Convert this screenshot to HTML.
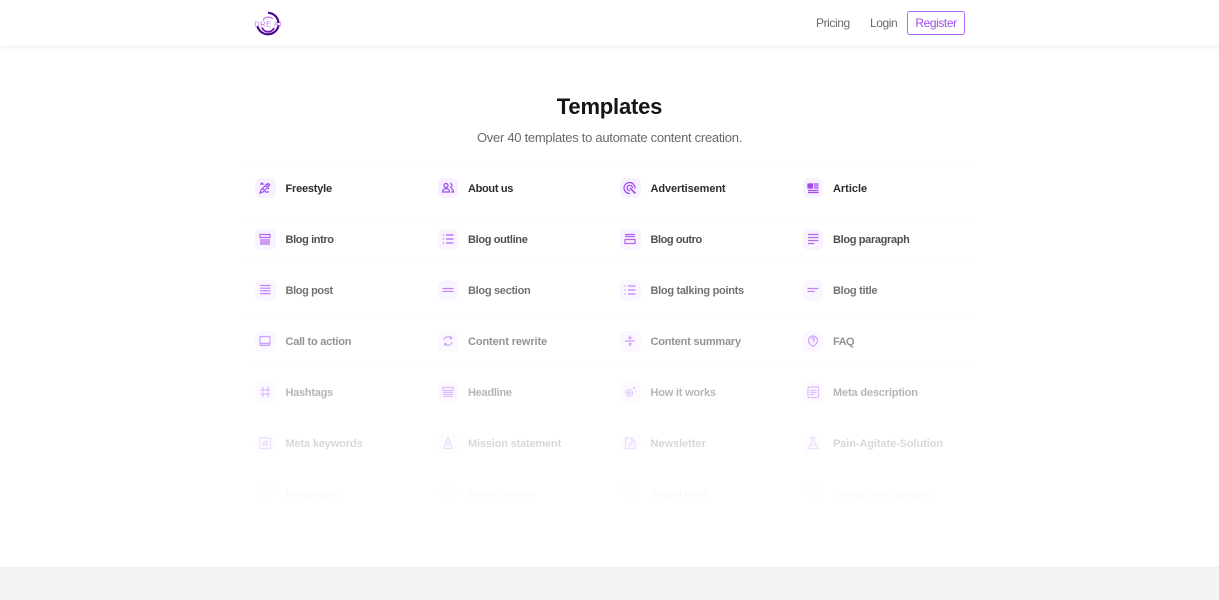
<!DOCTYPE html>
<html><head><meta charset="utf-8"><title>Templates</title>
<style>
html,body{margin:0;padding:0;background:#fff}
body{width:1219px;height:600px;position:relative;overflow:hidden;font-family:"Liberation Sans",sans-serif}
.hd{position:absolute;left:0;top:0;width:1219px;height:46px;background:#fff;box-shadow:0 1px 6px rgba(0,0,0,.09);z-index:5}
.nav{position:absolute;font-size:12px;line-height:16px;color:#6b6b6b;top:15px;letter-spacing:-.42px}
.reg{position:absolute;left:907px;top:11px;width:56px;height:22px;border:1px solid #b26cf5;border-radius:3px;color:#a24bf2;font-size:12px;line-height:22px;text-align:center;letter-spacing:-.42px}
h1{position:absolute;left:0;width:1219px;top:93px;margin:0;text-align:center;font-size:22px;line-height:28px;font-weight:700;color:#151515;letter-spacing:-.2px}
.sub{position:absolute;left:0;width:1219px;top:130px;text-align:center;font-size:13px;line-height:16px;color:#6a6a6a;letter-spacing:-.28px}
.ln{position:absolute;left:245px;width:732px;height:1px;background:#fafafa}
.it{position:absolute;width:180px;height:20px}
.ic{position:absolute;left:0;top:0;width:20.500px;height:20.500px;border-radius:6px;background:#f7f0ff}
.ic svg{position:absolute;left:0;top:0;width:20px;height:20px;fill:none;stroke:#9a3cf0;stroke-width:1.2}
.t{position:absolute;left:30.500px;top:3px;font-size:11px;line-height:16px;font-weight:700;color:#1b1b1b;white-space:nowrap;letter-spacing:-.2px}
.fade{position:absolute;left:230px;top:165px;width:760px;height:345px;background:linear-gradient(to bottom,rgba(255,255,255,0),#fff 98%);z-index:3}
.ft{position:absolute;left:0;top:567px;width:1219px;height:33px;background:#f3f3f3;border-top:1px solid #eeeeee;box-sizing:border-box}
</style></head><body>
<div class="hd">
<svg style="position:absolute;left:255px;top:11px;overflow:visible" width="26" height="26" viewBox="0 0 26 26" fill="none">
<path d="M13 1.800A10.800 10.800 0 0 1 23.500 12" stroke="#4c0a8a" stroke-width="2.200"/>
<path d="M23.600 14A10.800 10.800 0 0 1 2.400 15" stroke="#4c0a8a" stroke-width="2.200"/>
<path d="M7 16.500A6.500 6.500 0 0 0 19 17" stroke="#6d12b5" stroke-width="1.800"/>
<path d="M8 9A6.500 6.500 0 0 1 18 8" stroke="#b77af0" stroke-width="1.200"/>
<text x="13" y="15.500" text-anchor="middle" font-family="Liberation Sans" font-size="7.500" fill="#bb78f5" letter-spacing=".5">DRE AI</text>
</svg>
<div class="nav" style="left:816px">Pricing</div>
<div class="nav" style="left:870px">Login</div>
<div class="reg">Register</div>
</div>
<h1>Templates</h1>
<div class="sub">Over 40 templates to automate content creation.</div>
<div class="ln" style="top:162px"></div><div class="ln" style="top:217px"></div><div class="ln" style="top:263px"></div><div class="ln" style="top:318px"></div><div class="ln" style="top:363px"></div><div class="ln" style="top:420px"></div><div class="ln" style="top:463px"></div><div class="ln" style="top:478px"></div>

<div class="it" style="left:255px;top:177.500px"><div class="ic"><svg viewBox="0 0 20 20"><path d="M5 15l1-3 6-6 2 2-6 6zM5 6h3l-1.500-1.500M10 14h4M8 11l3 3M11 8l3 3M13 5l2 2"/></svg></div><div class="t" style="letter-spacing:-.21px">Freestyle</div></div>
<div class="it" style="left:437.500px;top:177.500px"><div class="ic"><svg viewBox="0 0 20 20"><circle cx="8" cy="7.500" r="2"/><path d="M4.500 14c0-4.500 7-4.500 7 0zM12 5.500a2 2 0 0 1 0 4M13 10.500c1.700.5 2.500 1.800 2.500 3.500H13"/></svg></div><div class="t" style="letter-spacing:-.32px">About us</div></div>
<div class="it" style="left:620px;top:177.500px"><div class="ic"><svg viewBox="0 0 20 20"><path d="M15 10.500A5.500 5.500 0 1 0 10 15.500M12.500 10a2.700 2.700 0 1 0-2.500 2.700"/><path d="M10 10l5.500 5.500" stroke-width="1.600"/></svg></div><div class="t" style="letter-spacing:-.11px">Advertisement</div></div>
<div class="it" style="left:802.500px;top:177.500px"><div class="ic"><svg viewBox="0 0 20 20"><path d="M5 6h4.500v4H5z" fill="#9a3cf0"/><path d="M11 6h4.500M11 8h4.500M11 10h4.500M5 12.500h10.500M5 14.500h10.500"/></svg></div><div class="t" style="letter-spacing:-.02px">Article</div></div>

<div class="it" style="left:255px;top:229px"><div class="ic"><svg viewBox="0 0 20 20"><path d="M5 5.500h10v3H5zM5 11h10M5 13h10M5 15h10"/></svg></div><div class="t" style="letter-spacing:-.38px">Blog intro</div></div>
<div class="it" style="left:437.500px;top:229px"><div class="ic"><svg viewBox="0 0 20 20"><path d="M8 6h7.500M8 10h7.500M8 14h7.500M5 6h1M5 10h1M5 14h1"/></svg></div><div class="t" style="letter-spacing:-.34px">Blog outline</div></div>
<div class="it" style="left:620px;top:229px"><div class="ic"><svg viewBox="0 0 20 20"><path d="M5 5.500h10M5 7.500h10M5 10.500h10v4H5z"/></svg></div><div class="t" style="letter-spacing:-.43px">Blog outro</div></div>
<div class="it" style="left:802.500px;top:229px"><div class="ic"><svg viewBox="0 0 20 20"><path d="M5 5.500h10.500M5 8.500h10.500M5 11.500h10.500M5 14.500h6"/></svg></div><div class="t" style="letter-spacing:-.34px">Blog paragraph</div></div>

<div class="it" style="left:255px;top:280px"><div class="ic"><svg viewBox="0 0 20 20"><path d="M5 5.500h10.500M5 8.200h10.500M5 10.900h10.500M5 13.600h10.500"/></svg></div><div class="t" style="letter-spacing:-.38px">Blog post</div></div>
<div class="it" style="left:437.500px;top:280px"><div class="ic"><svg viewBox="0 0 20 20"><path d="M4.500 8.500h11M4.500 11.500h11"/></svg></div><div class="t" style="letter-spacing:-.3px">Blog section</div></div>
<div class="it" style="left:620px;top:280px"><div class="ic"><svg viewBox="0 0 20 20"><path d="M8 6h7.500M8 10h7.500M8 14h7.500M5 5.500v1M5 9.500v1M5 13.500v1"/></svg></div><div class="t" style="letter-spacing:-.3px">Blog talking points</div></div>
<div class="it" style="left:802.500px;top:280px"><div class="ic"><svg viewBox="0 0 20 20"><path d="M4.500 8.500h11M4.500 11.500h7"/></svg></div><div class="t" style="letter-spacing:-.28px">Blog title</div></div>

<div class="it" style="left:255px;top:331px"><div class="ic"><svg viewBox="0 0 20 20"><rect x="5" y="5.500" width="10" height="9" rx="1"/><path d="M5 12.500h10" stroke-width="1.600"/></svg></div><div class="t" style="letter-spacing:-.24px">Call to action</div></div>
<div class="it" style="left:437.500px;top:331px"><div class="ic"><svg viewBox="0 0 20 20"><path d="M6 9a4.200 4.200 0 0 1 7.500-1.500M14 11a4.200 4.200 0 0 1-7.500 1.500M13.500 5.500v2h-2M6.500 14.500v-2h2"/></svg></div><div class="t" style="letter-spacing:-.11px">Content rewrite</div></div>
<div class="it" style="left:620px;top:331px"><div class="ic"><svg viewBox="0 0 20 20"><path d="M5 10h10M10 4.500v3M10 12.500v3M8.500 6.500l1.500 1.500 1.500-1.500M8.500 13.500l1.500-1.500 1.500 1.500"/></svg></div><div class="t" style="letter-spacing:-.21px">Content summary</div></div>
<div class="it" style="left:802.500px;top:331px"><div class="ic"><svg viewBox="0 0 20 20"><path d="M10 15.500c-2-1.500-4.500-3-4.500-6a4.500 4.500 0 0 1 9 0c0 3-2.500 4.500-4.500 6zM8.500 8.500a1.500 1.500 0 1 1 2 1.500l-.5.700M10 11.500v.8"/></svg></div><div class="t" style="letter-spacing:-.5px">FAQ</div></div>

<div class="it" style="left:255px;top:382px"><div class="ic"><svg viewBox="0 0 20 20"><path d="M8 4.500v11M13 4.500v11M5 8h10.500M5 12h10.500"/></svg></div><div class="t" style="letter-spacing:-.26px">Hashtags</div></div>
<div class="it" style="left:437.500px;top:382px"><div class="ic"><svg viewBox="0 0 20 20"><path d="M5 5.500h10v3H5zM5 10.500h10M5 12.500h10M5 14.500h10"/></svg></div><div class="t" style="letter-spacing:-.26px">Headline</div></div>
<div class="it" style="left:620px;top:382px"><div class="ic"><svg viewBox="0 0 20 20"><circle cx="9" cy="11" r="3.500" stroke-dasharray="2 .8"/><circle cx="9" cy="11" r="1.200"/><path d="M14 5v2M13 6h2M15.500 9v1"/></svg></div><div class="t" style="letter-spacing:-.21px">How it works</div></div>
<div class="it" style="left:802.500px;top:382px"><div class="ic"><svg viewBox="0 0 20 20"><rect x="5" y="5" width="10.500" height="10.500" rx="1"/><path d="M7 8.500h6.500M7 10.500h6.500M7 12.500h4"/></svg></div><div class="t" style="letter-spacing:-.16px">Meta description</div></div>

<div class="it" style="left:255px;top:433px"><div class="ic"><svg viewBox="0 0 20 20"><rect x="5" y="5" width="10.500" height="10.500" rx="1"/><path d="M9 7.500l-.5 5.500M11.500 7.500l-.5 5.500M7.500 9.200h5.500M7.500 11.500h5.500"/></svg></div><div class="t" style="letter-spacing:-.15px">Meta keywords</div></div>
<div class="it" style="left:437.500px;top:433px"><div class="ic"><svg viewBox="0 0 20 20"><path d="M10 4.500l3 7H7zM6 15.500l1-4h6l1 4zM9 8.500h2"/></svg></div><div class="t" style="letter-spacing:-.17px">Mission statement</div></div>
<div class="it" style="left:620px;top:433px"><div class="ic"><svg viewBox="0 0 20 20"><path d="M5.500 5h6l3.500 3.500v7H5.500zM11.500 5v3.500H15M8 10.500h4.500M8 12.800h4.500"/></svg></div><div class="t" style="letter-spacing:-.03px">Newsletter</div></div>
<div class="it" style="left:802.500px;top:433px"><div class="ic"><svg viewBox="0 0 20 20"><path d="M8 4.500h4M8.700 4.500v4.500L5 15.500h10L11.300 9V4.500M7 12h6"/></svg></div><div class="t" style="letter-spacing:-.09px">Pain-Agitate-Solution</div></div>

<div class="it" style="left:255px;top:484px"><div class="ic"><svg viewBox="0 0 20 20"><path d="M5 6h10.500M5 9h10.500M5 12h10.500M5 15h6"/></svg></div><div class="t">Paragraph</div></div>
<div class="it" style="left:437.500px;top:484px"><div class="ic"><svg viewBox="0 0 20 20"><rect x="5" y="6" width="10" height="9" rx="1"/><path d="M5 9h10"/></svg></div><div class="t">Press release</div></div>
<div class="it" style="left:620px;top:484px"><div class="ic"><svg viewBox="0 0 20 20"><rect x="5" y="5.500" width="10" height="8" rx="1"/><path d="M7 15.500h6"/></svg></div><div class="t">Social post</div></div>
<div class="it" style="left:802.500px;top:484px"><div class="ic"><svg viewBox="0 0 20 20"><rect x="5" y="5.500" width="10" height="8" rx="1"/><path d="M10 7.500v4M8 9.500h4M7 15.500h6"/></svg></div><div class="t">Social post caption</div></div>

<div class="fade"></div>
<div class="ft"></div>
</body></html>
